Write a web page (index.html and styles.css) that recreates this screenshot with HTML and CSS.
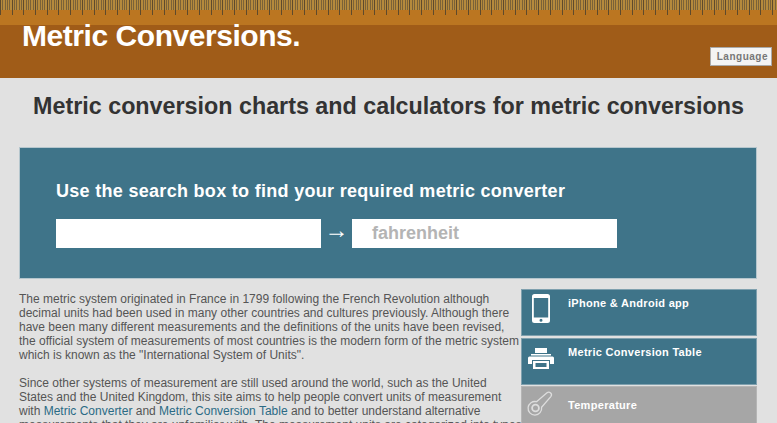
FILE: index.html
```html
<!DOCTYPE html>
<html>
<head>
<meta name="viewport" content="width=device-width, initial-scale=1">
<link rel="stylesheet" href="styles.css">
</head>
<body>

<div class="header">
  <div class="ruler"></div>
  <div class="header-main">
    <div class="logo">Metric Conversions.</div>
    <div class="language">Language</div>
  </div>
</div>

<h1>Metric conversion charts and calculators for metric conversions</h1>

<div class="search">
  <h2>Use the search box to find your required metric converter</h2>
  <div class="search-row">
    <div class="box"></div>
    <span class="arrow">&rarr;</span>
    <div class="box box-hint">fahrenheit</div>
  </div>
</div>

<div class="content">
  <div class="text">
    <p>The metric system originated in France in 1799 following the French Revolution although decimal units had been used in many other countries and cultures previously. Although there have been many different measurements and the definitions of the units have been revised, the official system of measurements of most countries is the modern form of the metric system which is known as the "International System of Units".</p>
    <p>Since other systems of measurement are still used around the world, such as the United States and the United Kingdom, this site aims to help people convert units of measurement with <a href="#">Metric Converter</a> and <a href="#">Metric Conversion Table</a> and to better understand alternative measurements that they are unfamiliar with. The measurement units are categorized into types</p>
  </div>
  <div class="side">
    <div class="tile">
      <svg class="icon" viewBox="0 0 36 36"><path fill="#fff" fill-rule="evenodd" d="M12.500 2h13A2.500 2.500 0 0 1 28 4.500v24a2.500 2.500 0 0 1-2.500 2.500h-13a2.500 2.500 0 0 1-2.500-2.500v-24A2.500 2.500 0 0 1 12.500 2zM11.800 6v19.500h14.400V6zM19 26.700a1.500 1.500 0 1 0 0 3 1.500 1.500 0 0 0 0-3z"/></svg>
      <span>iPhone &amp; Android app</span>
    </div>
    <div class="tile">
      <svg class="icon" viewBox="0 0 36 36"><path fill="#fff" fill-rule="evenodd" d="M13 7h12v5H13zM9 13h20v1.500H9zM7.500 15.500h23a1.500 1.500 0 0 1 1.500 1.500v6h-4v-4H10v4H6v-6a1.500 1.500 0 0 1 1.500-1.500zM11 20h16v8H11zm2.500 2v4h11v-4z"/></svg>
      <span>Metric Conversion Table</span>
    </div>
    <div class="tile tile-grey">
      <svg class="icon" viewBox="0 0 36 36"><g fill="none" stroke="#ddd" stroke-width="1.300"><path d="M14.500 12.700 25 3.800a2.700 2.700 0 0 1 3.800 3.800L19.600 18.300A6.800 6.800 0 1 1 14.500 12.700z"/><circle cx="13.500" cy="19" r="3.400" stroke-width="1.800"/></g></svg>
      <span>Temperature</span>
    </div>
  </div>
</div>

</body>
</html>
```
FILE: styles.css
```css
html, body {
  margin: 0;
  height: 423px;
  overflow: hidden;
}

body {
  background-color: #e1e1e1;
  font-family: "Liberation Sans", Arial, sans-serif;
  color: #333;
}

/* Header with the ruler along the top */
.header {
  height: 78px;
  background-color: #a05c18;
}

.ruler {
  height: 25px;
  background-color: #bb7621;
  background-image:
    repeating-linear-gradient(90deg, #5e4a2c 0, #5e4a2c 1px, transparent 1px, transparent 11.7px),
    repeating-linear-gradient(90deg, #7a6238 0, #7a6238 1px, #b58a3c 1px, #b58a3c 2.34px);
  background-size: 100% 15px, 100% 10px;
  background-repeat: no-repeat;
}

.header-main {
  display: flex;
  justify-content: space-between;
  padding-right: 5px;
}

.logo {
  margin: -6px 0 0 22px;
  font-size: 30px;
  font-weight: bold;
  letter-spacing: -0.45px;
  color: #fff;
}

.language {
  align-self: flex-start;
  margin-top: 22px;
  padding: 0 3px 0 6px;
  height: 17px;
  line-height: 17px;
  background-color: #f4f4f4;
  border: 1px solid #aaa;
  font-size: 10px;
  font-weight: bold;
  letter-spacing: 0.5px;
  color: #777;
}

h1 {
  margin: 15px 0 27px;
  text-align: center;
  font-size: 23.3px;
  line-height: 27px;
  color: #333;
}

/* Search panel */
.search {
  height: 132px;
  margin: 0 20px 0 19px;
  padding: 32px 36px 0;
  box-sizing: border-box;
  background-color: #3f7489;
  border: 1px solid #b5c6cd;
}

h2 {
  margin: 0;
  font-size: 18px;
  line-height: 22px;
  letter-spacing: 0.3px;
  color: #fff;
}

.search-row {
  display: flex;
  align-items: center;
  margin-top: 17px;
}

.box {
  width: 265px;
  height: 29px;
  box-sizing: border-box;
  background-color: #fff;
}

.box-hint {
  padding-left: 20px;
  font-size: 18px;
  font-weight: bold;
  line-height: 29px;
  color: #b4b4b4;
}

.arrow {
  width: 31px;
  margin-top: -8px;
  text-align: center;
  font-size: 24px;
  line-height: 29px;
  color: #fff;
}

/* Text and side tiles */
.content {
  display: flex;
  align-items: flex-start;
  margin: 13px 20px 0 19px;
}

.text {
  width: 504px;
  flex: none;
  font-size: 12px;
  line-height: 14px;
  color: #555;
}

.text p {
  margin: 0 0 14px;
}

.text a {
  color: #2b6b85;
  text-decoration: none;
}

.side {
  flex: none;
  width: 236px;
  margin: -3px 0 0 -2px;
}

.tile {
  display: flex;
  height: 47px;
  margin-bottom: 1.5px;
  box-sizing: border-box;
  background-color: #3f7489;
  border: 1px solid #7fa0ae;
  font-size: 11px;
  font-weight: bold;
  letter-spacing: 0.3px;
  color: #fff;
}

.tile span {
  padding-top: 7px;
}

.tile-grey {
  height: 60px;
  background-color: #a6a6a6;
  border-color: #b5b5b5;
}

.tile-grey span {
  padding-top: 12px;
}

.icon {
  width: 36px;
  height: 36px;
  margin: 2px 10px 0 0;
  flex: none;
}
```
